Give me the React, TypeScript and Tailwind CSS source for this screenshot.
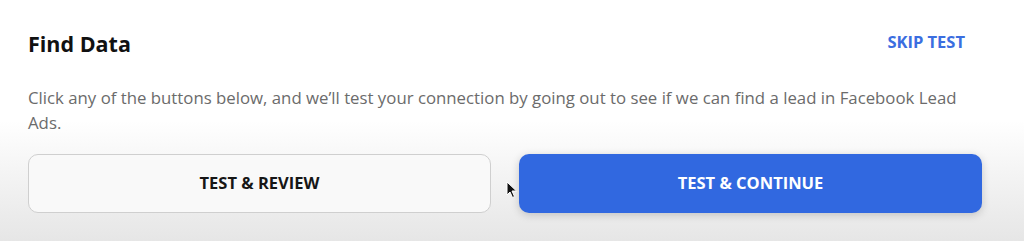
export default function App() {
  return (
    <div
      className="relative h-[241px] w-[1024px] overflow-hidden bg-linear-to-b from-white from-50% to-[#e6e6e6] pl-[28px] pr-[42px] pt-[30px]"
      style={{ fontFamily: '"Open Sans", sans-serif' }}
    >
      <div className="flex items-center justify-between">
        <h1 className="text-[21.5px] font-bold leading-[28px] text-[#111]">Find Data</h1>
        <button className="-mt-[4px] mr-[17px] text-[16.5px] font-bold leading-[20px] text-[#3b6ee0]">
          SKIP TEST
        </button>
      </div>
      <p className="mt-[27px] text-[16.8px] leading-[25px] text-[#6b6b6b]">
        Click any of the buttons below, and we’ll test your connection by going out to see if we can find a lead in Facebook Lead Ads.
      </p>
      <div className="mt-[19px] grid grid-cols-2 gap-[28px]">
        <button className="h-[59px] rounded-[10px] border border-[#cfcfcf] bg-[#f9f9f9] text-[16.5px] font-bold text-[#161616]">
          TEST &amp; REVIEW
        </button>
        <button className="h-[59px] rounded-[10px] bg-[#3168e0] text-[16.5px] font-bold text-white shadow-[0_2px_8px_rgba(0,0,0,0.18)]">
          TEST &amp; CONTINUE
        </button>
      </div>
      <svg
        className="absolute left-[506px] top-[181px]"
        width="12"
        height="18"
        viewBox="0 0 12 18"
      >
        <path d="M1 1 L1 14 L4 11 L6.5 16.5 L8.5 15.5 L6 10 L10.5 10 Z" fill="#111" stroke="#fff" strokeWidth="1" />
      </svg>
    </div>
  );
}
